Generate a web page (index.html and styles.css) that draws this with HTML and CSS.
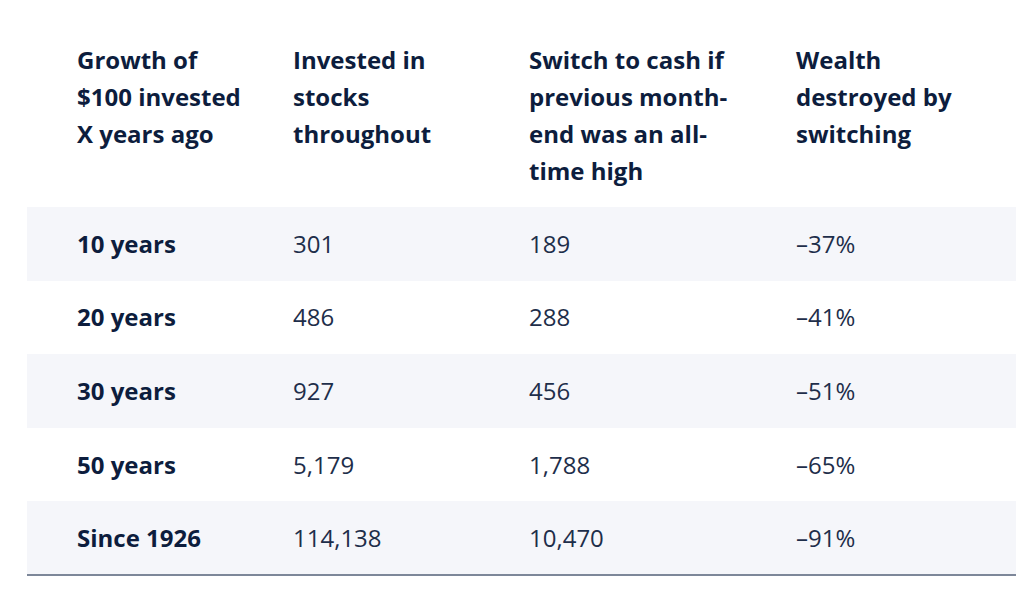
FILE: index.html
```html
<!DOCTYPE html>
<html>
<head>
<meta charset="utf-8">
<link rel="stylesheet" href="styles.css">
</head>
<body>
<div class="wrap">
<table class="growth">
  <colgroup>
    <col class="c1"><col class="c2"><col class="c3"><col class="c4">
  </colgroup>
  <thead>
    <tr>
      <th>Growth of<br>$100 invested<br>X years ago</th>
      <th>Invested in<br>stocks<br>throughout</th>
      <th>Switch to cash if<br>previous month-<br>end was an all-<br>time high</th>
      <th>Wealth<br>destroyed by<br>switching</th>
    </tr>
  </thead>
  <tbody>
    <tr class="shade"><td class="lbl">10 years</td><td>301</td><td>189</td><td>–37%</td></tr>
    <tr><td class="lbl">20 years</td><td>486</td><td>288</td><td>–41%</td></tr>
    <tr class="shade"><td class="lbl">30 years</td><td>927</td><td>456</td><td>–51%</td></tr>
    <tr><td class="lbl">50 years</td><td>5,179</td><td>1,788</td><td>–65%</td></tr>
    <tr class="shade last"><td class="lbl">Since 1926</td><td>114,138</td><td>10,470</td><td>–91%</td></tr>
  </tbody>
</table>
</div>
</body>
</html>
```

FILE: styles.css
```css
html, body {
  margin: 0;
  padding: 0;
  background: #ffffff;
}
.wrap {
  padding: 41px 16px 0 27px;
}
.growth {
  width: 989px;
  border-collapse: collapse;
  table-layout: fixed;
  font-family: "Open Sans", "Noto Sans", sans-serif;
  font-size: 24px;
}
.c1 { width: 216px; }
.c2 { width: 236px; }
.c3 { width: 267px; }
.c4 { width: 270px; }
.growth th {
  text-align: left;
  vertical-align: top;
  font-weight: 700;
  color: #0d1d3d;
  line-height: 37px;
  padding: 0 0 18px 50px;
  white-space: nowrap;
}
.growth td {
  height: 73.6px;
  padding: 0 0 0 50px;
  box-sizing: border-box;
  color: #1e2e4a;
  font-weight: 400;
  line-height: 30px;
  vertical-align: middle;
}
.growth td.lbl {
  font-weight: 700;
  color: #0d1d3d;
}
.shade td {
  background: #f5f6fa;
}
.last td {
  border-bottom: 2px solid #7d8799;
}
```
